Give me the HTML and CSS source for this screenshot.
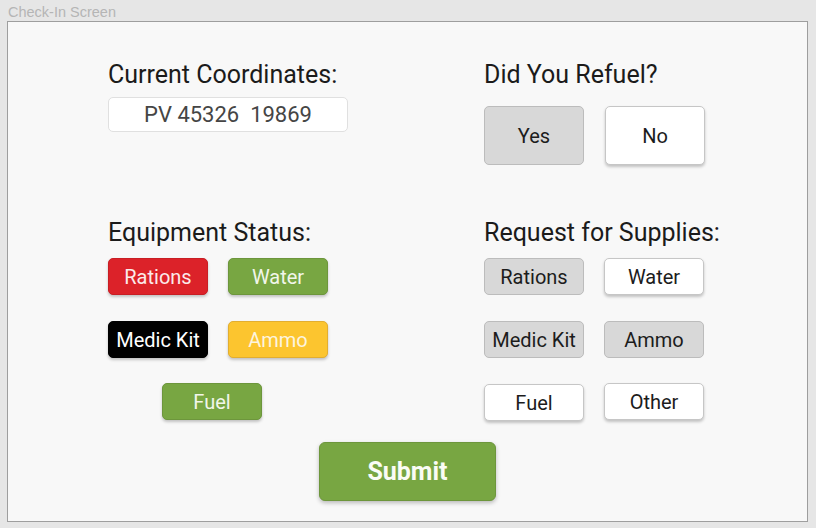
FILE: index.html
```html
<!DOCTYPE html>
<html>
<head>
<meta charset="utf-8">
<link rel="stylesheet" href="styles.css">
</head>
<body>
<div class="caption">Check-In Screen</div>
<div class="frame">
  <div class="grid">
    <section class="cell">
      <h2 class="heading">Current Coordinates:</h2>
      <div class="coords">PV 45326  19869</div>
    </section>
    <section class="cell">
      <h2 class="heading">Did You Refuel?</h2>
      <div class="yesno">
        <button class="big grey">Yes</button>
        <button class="big white">No</button>
      </div>
    </section>
    <section class="cell">
      <h2 class="heading">Equipment Status:</h2>
      <div class="btns">
        <button class="chip red">Rations</button>
        <button class="chip green">Water</button>
        <button class="chip black">Medic Kit</button>
        <button class="chip yellow">Ammo</button>
        <button class="chip green center">Fuel</button>
      </div>
    </section>
    <section class="cell">
      <h2 class="heading">Request for Supplies:</h2>
      <div class="btns">
        <button class="chip grey">Rations</button>
        <button class="chip white">Water</button>
        <button class="chip grey">Medic Kit</button>
        <button class="chip grey">Ammo</button>
        <button class="chip white">Fuel</button>
        <button class="chip white up">Other</button>
      </div>
    </section>
  </div>
  <div class="submit-row">
    <button class="submit">Submit</button>
  </div>
</div>
</body>
</html>
```

FILE: styles.css
```css
* { box-sizing: border-box; }
html, body {
  margin: 0;
  padding: 0;
  background: #e6e6e6;
  font-family: Roboto, "Liberation Sans", sans-serif;
}
.caption {
  height: 21px;
  padding-left: 8px;
  padding-top: 4px;
  font-family: "Liberation Sans", Arial, sans-serif;
  font-size: 14.5px;
  line-height: 16px;
  color: #b5b5b5;
}
.frame {
  margin-left: 7px;
  width: 801px;
  height: 501px;
  border: 1px solid #9e9e9e;
  background: #f8f8f8;
  padding-top: 38px;
}
.grid {
  display: grid;
  grid-template-columns: 376px 1fr;
  grid-template-rows: 158px auto;
  padding-left: 100px;
}
.heading {
  margin: 0;
  font-size: 25px;
  line-height: 30px;
  font-weight: 400;
  color: #1b1b1b;
}
.coords {
  margin-top: 7px;
  width: 240px;
  height: 35px;
  background: #fff;
  border: 1px solid #e0e0e0;
  border-radius: 5px;
  font-size: 22px;
  line-height: 33px;
  text-align: center;
  color: #454545;
  white-space: pre;
}
.yesno {
  margin-top: 16px;
  display: flex;
  gap: 21px;
}
button {
  font-family: Roboto, "Liberation Sans", sans-serif;
  padding: 0;
  cursor: pointer;
}
.big {
  width: 100px;
  height: 59px;
  border-radius: 5px;
  font-size: 20px;
  color: #1c1c1c;
}
.btns {
  margin-top: 10px;
  display: grid;
  grid-template-columns: 100px 100px;
  column-gap: 20px;
  row-gap: 26px;
}
.chip {
  height: 37px;
  border-radius: 5px;
  font-size: 20px;
  line-height: 20px;
}
.center {
  grid-column: 1 / span 2;
  width: 100px;
  margin-left: 54px;
  margin-top: -1px;
}
.up { margin-top: -1px; }
.grey {
  background: #d8d8d8;
  border: 1px solid #bcbcbc;
  color: #1c1c1c;
}
.white {
  background: #fff;
  border: 1px solid #c6c6c6;
  color: #1c1c1c;
  box-shadow: 0 2px 3px rgba(0, 0, 0, 0.22);
}
.red {
  background: #dc2229;
  border: 1px solid #c81e24;
  color: #fbeaea;
  box-shadow: 0 2px 3px rgba(0, 0, 0, 0.22);
}
.green {
  background: #78a642;
  border: 1px solid #6d963c;
  color: #f2f6ea;
  box-shadow: 0 2px 3px rgba(0, 0, 0, 0.22);
}
.black {
  background: #000;
  border: 1px solid #000;
  color: #fff;
  box-shadow: 0 2px 3px rgba(0, 0, 0, 0.22);
}
.yellow {
  background: #fcc52f;
  border: 1px solid #e2ae30;
  color: #fdf4df;
  box-shadow: 0 2px 3px rgba(0, 0, 0, 0.22);
}
.submit-row {
  display: flex;
  justify-content: center;
  margin-top: 21px;
}
.submit {
  width: 177px;
  height: 59px;
  border-radius: 6px;
  background: #78a642;
  border: 1px solid #6d963c;
  color: #fafcf5;
  font-size: 25px;
  font-weight: 700;
  box-shadow: 0 2px 4px rgba(0, 0, 0, 0.25);
}
```
